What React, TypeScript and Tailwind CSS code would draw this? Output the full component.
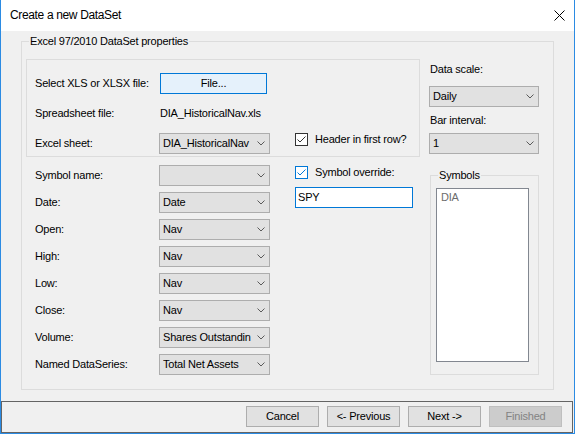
import React from 'react';

const Chevron = () => (
  <svg width="8" height="5" viewBox="0 0 8 5" className="shrink-0">
    <polyline points="0.5,0.5 4,4 7.5,0.5" fill="none" stroke="#5a5a5a" strokeWidth="1" />
  </svg>
);

const Combo: React.FC<{ value?: string; className?: string }> = ({ value = '', className = 'w-[111px]' }) => (
  <div className={`${className} h-[21px] flex items-center bg-[#e1e1e1] border border-[#adadad] pl-[3px] pr-[4px]`}>
    <span className="flex-1 min-w-0 mr-[3px] overflow-hidden whitespace-nowrap">{value}</span>
    <Chevron />
  </div>
);

const Check: React.FC<{ focused?: boolean }> = ({ focused }) => (
  <div
    className={`w-[13px] h-[13px] shrink-0 bg-white border flex items-center justify-center ${
      focused ? 'border-[#0078d7]' : 'border-[#333333]'
    }`}
  >
    <svg width="11" height="11" viewBox="0 0 11 11">
      <polyline
        points="1.5,5.5 4,8 9.5,2.5"
        fill="none"
        stroke={focused ? '#0078d7' : '#333333'}
        strokeWidth="1"
      />
    </svg>
  </div>
);

const Button: React.FC<{ label: string; disabled?: boolean }> = ({ label, disabled }) => (
  <div
    className={`w-[73px] h-[21px] flex items-center justify-center border ${
      disabled ? 'bg-[#cccccc] border-[#bfbfbf] text-[#838383]' : 'bg-[#e1e1e1] border-[#adadad] text-black'
    }`}
  >
    {label}
  </div>
);

// combo shows only what fits, as the dialog does
const fields: [string, string][] = [
  ['Symbol name:', ''],
  ['Date:', 'Date'],
  ['Open:', 'Nav'],
  ['High:', 'Nav'],
  ['Low:', 'Nav'],
  ['Close:', 'Nav'],
  ['Volume:', 'Shares Outstandin'],
  ['Named DataSeries:', 'Total Net Assets'],
];

export default function App() {
  return (
    <div className="w-[575px] h-[434px] flex flex-col border-x border-b border-[#2b8be3] bg-[#f0f0f0] text-[11px] leading-[13px] tracking-[-0.2px] text-black font-['Liberation_Sans',Arial,sans-serif] overflow-hidden">
      {/* title bar */}
      <div className="h-[31px] shrink-0 bg-white flex items-center justify-between pl-[9px] pr-[9px]">
        <span className="text-[12px] tracking-[-0.35px]">Create a new DataSet</span>
        <svg width="11" height="11" viewBox="0 0 11 11">
          <path d="M0.5 0.5 L10.5 10.5 M10.5 0.5 L0.5 10.5" stroke="#000" strokeWidth="1" />
        </svg>
      </div>

      {/* body */}
      <div className="h-[370px] shrink-0 pl-[20px] pt-[10px]">
        <div className="relative w-[533px] h-[349px] border border-[#dcdcdc] flex">
          <span className="absolute left-[7px] top-[-7px] px-[1px] bg-[#f0f0f0]">Excel 97/2010 DataSet properties</span>

          {/* left column */}
          <div className="ml-[4px] mt-[17px] flex flex-col">
            <div className="w-[394px] h-[98px] border border-[#dcdcdc] pl-[8px] pt-[13px] flex flex-col gap-[9px]">
              <div className="h-[21px] flex items-center">
                <span className="w-[125px]">Select XLS or XLSX file:</span>
                <div className="w-[107px] h-[21px] flex items-center justify-center bg-[#e5f1fb] border border-[#0078d7]">File...</div>
              </div>
              <div className="h-[21px] flex items-center">
                <span className="w-[125px]">Spreadsheet file:</span>
                <span>DIA_HistoricalNav.xls</span>
              </div>
              <div className="h-[21px] flex items-start">
                <span className="w-[124px] self-center">Excel sheet:</span>
                <Combo value="DIA_HistoricalNav" />
                <div className="ml-[25px] flex items-center gap-[7px] h-[13px]">
                  <Check />
                  <span>Header in first row?</span>
                </div>
              </div>
            </div>

            <div className="mt-[8px] pl-[9px] flex">
              <div className="flex flex-col gap-[6px]">
                {fields.map(([label, value]) => (
                  <div key={label} className="h-[21px] flex items-center">
                    <span className="w-[124px]">{label}</span>
                    <Combo value={value} />
                  </div>
                ))}
              </div>
              <div className="ml-[25px] pt-[1px] flex flex-col">
                <div className="h-[13px] flex items-center gap-[7px]">
                  <Check focused />
                  <span>Symbol override:</span>
                </div>
                <div className="mt-[8px] w-[118px] h-[21px] bg-white border border-[#0078d7] flex items-center pl-[2px]">
                  SPY
                </div>
              </div>
            </div>
          </div>

          {/* right column */}
          <div className="ml-[9px] pt-[21px] w-[110px] flex flex-col">
            <span className="pl-[1px]">Data scale:</span>
            <Combo value="Daily" className="w-[110px] mt-[10px]" />
            <span className="pl-[1px] mt-[7px]">Bar interval:</span>
            <Combo value="1" className="w-[110px] mt-[6px]" />
            <div className="relative ml-[1px] mt-[21px] w-[109px] h-[200px] border border-[#dcdcdc] pl-[5px] pt-[12px]">
              <span className="absolute left-[7px] top-[-7px] px-[1px] bg-[#f0f0f0]">Symbols</span>
              <div className="w-[93px] h-[174px] bg-white border border-[#828790] pl-[4px] pt-[2px] text-[#6d6d6d]">DIA</div>
            </div>
          </div>
        </div>
      </div>

      {/* button panel */}
      <div className="w-[572px] h-[32px] shrink-0 border border-[#646464] flex justify-end gap-[8px] pt-[4px] pr-[10px]">
        <Button label="Cancel" />
        <Button label="<- Previous" />
        <Button label="Next ->" />
        <Button label="Finished" disabled />
      </div>
    </div>
  );
}
